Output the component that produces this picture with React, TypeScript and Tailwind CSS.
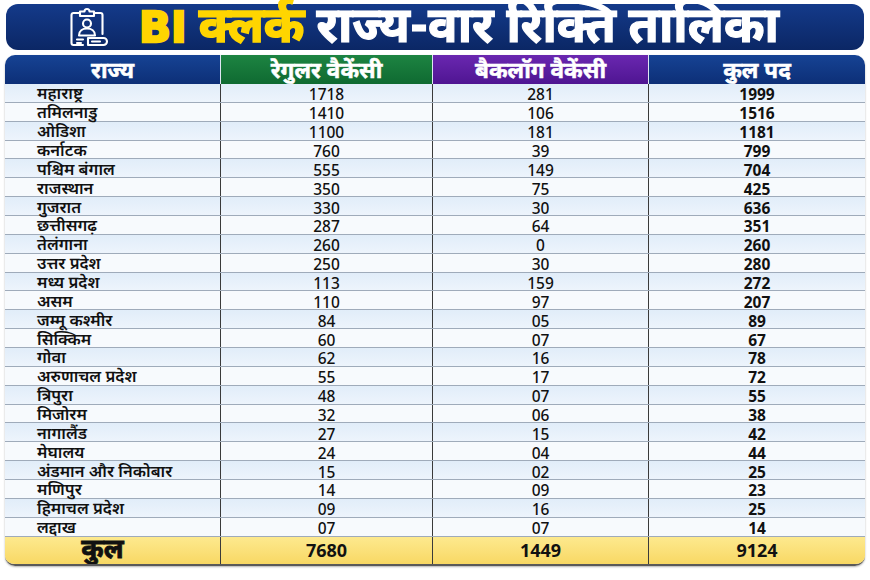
import React from 'react';

const rows: [string, string, string, string][] = [
  ['महाराष्ट्र', '1718', '281', '1999'],
  ['तमिलनाडु', '1410', '106', '1516'],
  ['ओडिशा', '1100', '181', '1181'],
  ['कर्नाटक', '760', '39', '799'],
  ['पश्चिम बंगाल', '555', '149', '704'],
  ['राजस्थान', '350', '75', '425'],
  ['गुजरात', '330', '30', '636'],
  ['छत्तीसगढ़', '287', '64', '351'],
  ['तेलंगाना', '260', '0', '260'],
  ['उत्तर प्रदेश', '250', '30', '280'],
  ['मध्य प्रदेश', '113', '159', '272'],
  ['असम', '110', '97', '207'],
  ['जम्मू कश्मीर', '84', '05', '89'],
  ['सिक्किम', '60', '07', '67'],
  ['गोवा', '62', '16', '78'],
  ['अरुणाचल प्रदेश', '55', '17', '72'],
  ['त्रिपुरा', '48', '07', '55'],
  ['मिजोरम', '32', '06', '38'],
  ['नागालैंड', '27', '15', '42'],
  ['मेघालय', '24', '04', '44'],
  ['अंडमान और निकोबार', '15', '02', '25'],
  ['मणिपुर', '14', '09', '23'],
  ['हिमाचल प्रदेश', '09', '16', '25'],
  ['लद्दाख', '07', '07', '14'],
];

const font = { fontFamily: '"Noto Sans Devanagari", "Noto Sans", "Liberation Sans", sans-serif' };
const num = { fontFamily: '"Noto Sans", "Open Sans", "Liberation Sans", sans-serif' };

// clipboard with a person and an id card sticking out at the bottom right
const ClipboardIcon = () => (
  <svg width="40" height="40" viewBox="0 0 40 40" fill="none" stroke="white" strokeWidth="2.1" strokeLinecap="round" strokeLinejoin="round">
    <path d="M11 6H4.5a2 2 0 0 0-2 2v28a2 2 0 0 0 2 2H14" />
    <path d="M25 6h6.5a2 2 0 0 1 2 2v19" />
    <path d="M11 9V4.5h4.5a2.5 2.5 0 0 1 5 0H25V9z" />
    <circle cx="18" cy="16.5" r="4" />
    <path d="M10 28.5c0-4.5 3.5-7 8-7s8 2.5 8 7z" />
    <path d="M8 32.5h6M8 36h4" />
    <path d="M19 31h15.5a3.5 3.5 0 0 1 0 7H19z" />
    <path d="M23 34.5h8" />
  </svg>
);

const cols = 'grid grid-cols-[216px_212px_216px_1fr]';

export default function App() {
  return (
    <div className="w-[870px] h-[580px] bg-white px-[5px] pt-[4px]" style={font}>
      <div className="h-[46px] mx-[1px] rounded-[12px] bg-gradient-to-b from-[#143a8a] to-[#0b2765] flex items-center justify-center gap-[30px] pr-[22px]">
        <ClipboardIcon />
        <div className="text-[49px] font-bold leading-[40px] flex items-center gap-[12px] pt-[6px] whitespace-nowrap">
          <span className="text-[#ffd500] flex items-center gap-[12px] [-webkit-text-stroke:1.6px_#ffd500]">
            <span
              className="text-[42px] font-bold [-webkit-text-stroke:2.4px_#ffd500] -mt-[4px]"
              style={{ fontFamily: '"DejaVu Sans", "Liberation Sans", sans-serif' }}
            >
              BI
            </span>
            <span>क्लर्क</span>
          </span>
          <span className="text-white [-webkit-text-stroke:1.2px_white]">राज्य-वार रिक्ति तालिका</span>
        </div>
      </div>

      <div className="mt-[5px] rounded-[10px] overflow-hidden border-b-2 border-[#5a5a5a] shadow-[0_1px_2px_rgba(0,0,0,0.3)]">
        <div className={`${cols} h-[29px] text-white text-[22.5px] font-bold leading-[18px] text-center [-webkit-text-stroke:0.5px_white]`}>
          <div className="bg-gradient-to-b from-[#164394] to-[#0d2f77] border-r border-[#dfe6f2] pt-[8.5px]">राज्य</div>
          <div className="bg-gradient-to-b from-[#1d8442] to-[#0f6a31] border-r border-[#dfe6f2] pt-[8.5px]">रेगुलर वैकेंसी</div>
          <div className="bg-gradient-to-b from-[#6a27b0] to-[#4f1592] border-r border-[#dfe6f2] pt-[8.5px]">बैकलॉग वैकेंसी</div>
          <div className="bg-gradient-to-b from-[#164394] to-[#0d2f77] pt-[8.5px]">कुल पद</div>
        </div>
        {rows.map((r, i) => (
          <div
            key={r[0]}
            className={`${cols} h-[18.87px] text-[#111] border-b border-[#9fabba] ${
              i % 2 === 0 ? 'bg-gradient-to-b from-[#e1edf9] to-[#edf4fc]' : 'bg-[#f7fafd]'
            }`}
          >
            <div className="pl-[32px] pt-[6.4px] leading-[11px] border-r border-[#3a3a3a] font-semibold text-[16.5px] whitespace-nowrap">{r[0]}</div>
            <div className="text-center pt-[4.4px] leading-[13px] border-r border-[#3a3a3a] font-medium text-[15.5px]" style={num}>{r[1]}</div>
            <div className="text-center pt-[4.4px] leading-[13px] border-r border-[#3a3a3a] font-medium text-[15.5px]" style={num}>{r[2]}</div>
            <div className="text-center pt-[4.4px] leading-[13px] font-bold text-[15.5px]" style={num}>{r[3]}</div>
          </div>
        ))}
        <div className={`${cols} h-[27px] bg-gradient-to-b from-[#fde98e] to-[#f8d863] text-[#111] font-bold text-[18px] leading-[20px] text-center`}>
          <div className="pr-[20px] pt-[5px] leading-[20px] border-r border-[#3a3a3a] text-[27px] [-webkit-text-stroke:0.8px_#111]">कुल</div>
          <div className="pt-[3.5px] border-r border-[#3a3a3a]" style={num}>7680</div>
          <div className="pt-[3.5px] border-r border-[#3a3a3a]" style={num}>1449</div>
          <div className="pt-[3.5px]" style={num}>9124</div>
        </div>
      </div>
    </div>
  );
}
